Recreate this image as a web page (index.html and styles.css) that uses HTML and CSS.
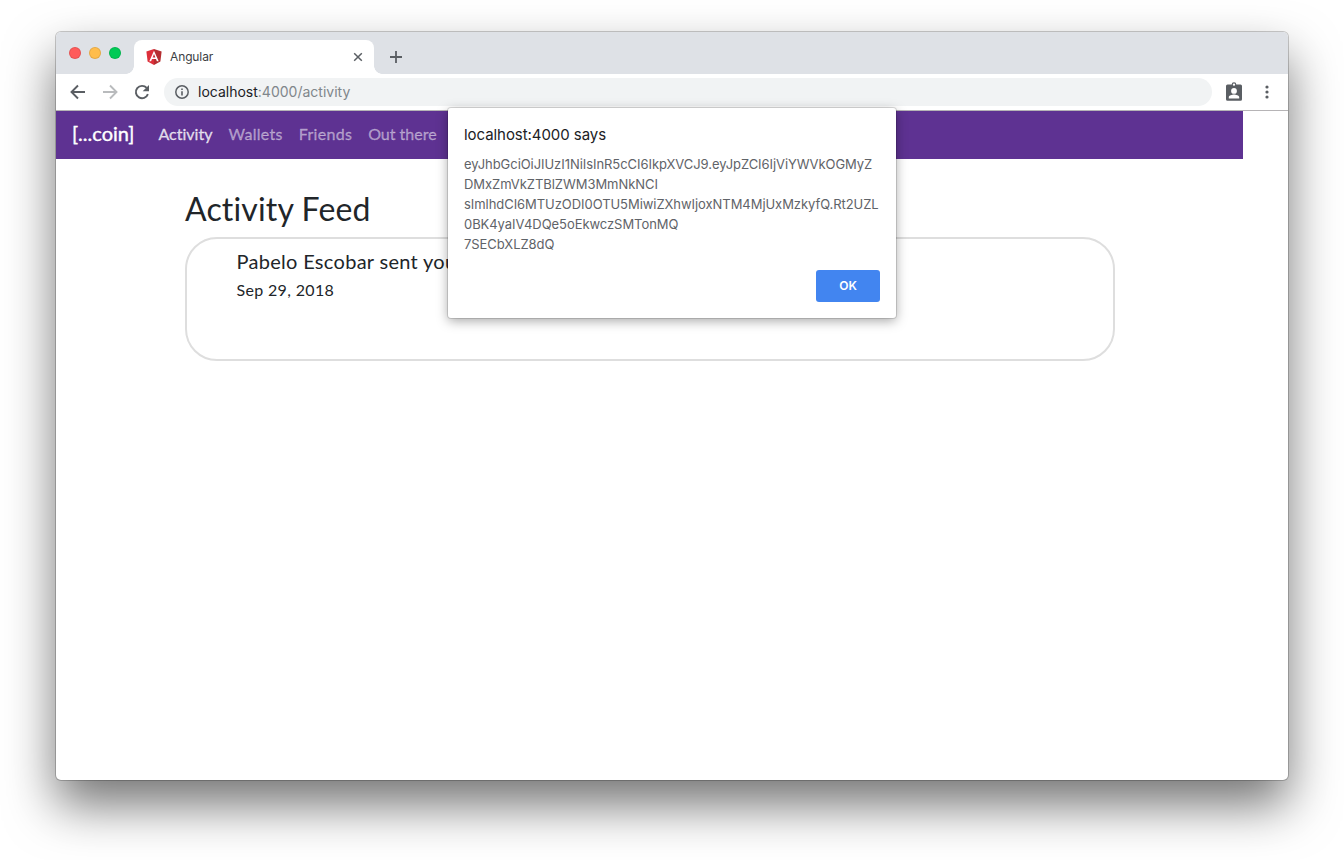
FILE: index.html
```html
<!DOCTYPE html>
<html lang="en">
<head>
<meta charset="utf-8">
<title>Angular</title>
<link rel="stylesheet" href="styles.css">
</head>
<body>
<div class="window">
  <div class="tabstrip">
    <div class="lights"><span class="light red"></span><span class="light yellow"></span><span class="light green"></span></div>
    <div class="tab">
      <svg class="favicon" width="16" height="18" viewBox="0 0 16 18"><path fill="#dd2f3a" d="M8 1 0.4 3.6l1.2 9.900L8 17z"/><path fill="#b52e31" d="M8 1l7.600 2.600-1.200 9.900L8 17z"/><path fill="#fff" fill-rule="evenodd" d="M8 2.800 3.300 13.200h1.800l.9-2.300h4l.9 2.300h1.800zM8 6.100l1.400 3.300H6.600z"/></svg>
      <span class="tab-title">Angular</span>
      <svg class="tab-close" width="10" height="10" viewBox="0 0 10 10"><path d="M1.200 1.200l7.600 7.600M8.800 1.200 1.200 8.800" stroke="#5a5e63" stroke-width="1.500"/></svg>
    </div>
    <svg class="new-tab" width="12" height="12" viewBox="0 0 12 12"><path d="M6 0v12M0 6h12" stroke="#5a5e63" stroke-width="1.800"/></svg>
  </div>
  <div class="toolbar">
    <svg class="tool" width="16" height="16" viewBox="0 0 16 16"><path d="M15 8H2M8 1.500 1.500 8 8 14.500" fill="none" stroke="#5a5e63" stroke-width="1.900"/></svg>
    <svg class="tool" width="16" height="16" viewBox="0 0 16 16"><path d="M1 8h13M8 1.500 14.500 8 8 14.500" fill="none" stroke="#b9bbbd" stroke-width="1.900"/></svg>
    <svg class="tool" width="16" height="16" viewBox="0 0 16 16"><path d="M13.900 10.200A6.200 6.200 0 1 1 12.700 3.900" fill="none" stroke="#5a5e63" stroke-width="1.900"/><path d="M15 1v6.300H8.700z" fill="#5a5e63"/></svg>
    <div class="omnibox">
      <svg width="14" height="14" viewBox="0 0 14 14"><circle cx="7" cy="7" r="6.200" fill="none" stroke="#5a5e63" stroke-width="1.500"/><path d="M7 6.200v4.300M7 3.400v1.600" stroke="#5a5e63" stroke-width="1.600"/></svg>
      <span class="url"><span class="host">localhost</span>:4000/activity</span>
    </div>
    <svg class="profile" width="16" height="19" viewBox="0 0 16 19"><path fill="#5a5e63" fill-rule="evenodd" d="M1.500 2.500h4.200a2.300 2.300 0 0 1 4.600 0h4.200A1.500 1.500 0 0 1 16 4v13.200a1.500 1.500 0 0 1-1.500 1.500h-13A1.500 1.500 0 0 1 0 17.200V4a1.500 1.500 0 0 1 1.500-1.500zM8 1.400a1.200 1.200 0 1 0 0 2.400 1.200 1.200 0 0 0 0-2.400zM8 6a2.900 2.900 0 1 0 0 5.800A2.900 2.900 0 0 0 8 6zm-5.200 10.500h10.400v-1.300c0-1.700-3.400-2.600-5.200-2.600s-5.200.9-5.200 2.600z"/></svg>
    <svg class="menu" width="4" height="14" viewBox="0 0 4 14"><g fill="#5a5e63"><circle cx="2" cy="2" r="1.600"/><circle cx="2" cy="7" r="1.600"/><circle cx="2" cy="12" r="1.600"/></g></svg>
  </div>
  <main class="page">
    <nav class="navbar">
      <span class="brand">[...coin]</span>
      <span class="link active">Activity</span>
      <span class="link wide">Wallets</span>
      <span class="link wide">Friends</span>
      <span class="link">Out there</span>
    </nav>
    <section class="feed">
      <h1>Activity Feed</h1>
      <article class="card">
        <div class="entry">Pabelo Escobar sent you</div>
        <div class="date">Sep 29, 2018</div>
      </article>
    </section>
  </main>
  <div class="dialog">
    <div class="dialog-title">localhost:4000 says</div>
    <div class="token">eyJhbGciOiJIUzI1NiIsInR5cCI6IkpXVCJ9.eyJpZCI6IjViYWVkOGMyZ<br>DMxZmVkZTBlZWM3MmNkNCI<br>sImlhdCI6MTUzODI0OTU5MiwiZXhwIjoxNTM4MjUxMzkyfQ.Rt2UZL<br>0BK4yaIV4DQe5oEkwczSMTonMQ<br>7SECbXLZ8dQ</div>
    <button class="ok">OK</button>
  </div>
</div>
</body>
</html>
```
FILE: styles.css
```css
* { box-sizing: border-box; }
body {
  margin: 0;
  height: 860px;
  padding: 32px 56px 80px;
  background: #fff;
  overflow: hidden;
  font-family: Inter, sans-serif;
}
svg { display: block; flex: none; }
.window {
  position: relative;
  height: 748px;
  border-radius: 5px;
  background: #fff;
  box-shadow: 0 0 0 1px rgba(0, 0, 0, .2), 0 25px 50px rgba(0, 0, 0, .55);
}
.tabstrip {
  display: flex;
  align-items: flex-end;
  height: 42px;
  background: #dee1e6;
  border-radius: 5px 5px 0 0;
}
.lights { display: flex; gap: 8px; padding: 0 19px 15px 13px; }
.light { width: 12px; height: 12px; border-radius: 50%; border: 1px solid rgba(0, 0, 0, .1); }
.red { background: #ff5b5b; }
.yellow { background: #ffbd4c; }
.green { background: #00ca56; }
.tab {
  position: relative;
  display: flex;
  align-items: center;
  width: 240px;
  height: 34px;
  margin-left: -6px;
  margin-right: 16px;
  padding: 0 11px 0 12px;
  background: #fff;
  border-radius: 8px 8px 0 0;
}
.tab::before,
.tab::after {
  content: "";
  position: absolute;
  bottom: 0;
  width: 8px;
  height: 8px;
}
.tab::before { left: -8px; background: radial-gradient(circle at 0 0, transparent 7.5px, #fff 8px); }
.tab::after { right: -8px; background: radial-gradient(circle at 100% 0, transparent 7.5px, #fff 8px); }
.tab-title {
  flex: 1;
  margin-left: 8px;
  padding-bottom: 2px;
  font-size: 12px;
  letter-spacing: -.12px;
  color: #3c4043;
}
.new-tab { margin-bottom: 11px; }
.toolbar {
  display: flex;
  align-items: center;
  height: 37px;
  padding: 0 19.500px 0 14px;
  border-bottom: 1px solid #b6b4b6;
}
.tool { margin-right: 16px; }
.omnibox {
  display: flex;
  align-items: center;
  gap: 9px;
  width: 1048px;
  height: 28px;
  margin-left: -2px;
  padding-left: 11px;
  border-radius: 14px;
  background: #f1f3f4;
}
.url { padding-bottom: 2px; font-size: 14px; color: #80868b; }
.host { color: #202124; }
.profile { margin: 0 0 2px 14px; }
.menu { margin-left: auto; }
.page {
  font-family: Lato, sans-serif;
  font-variant-ligatures: none;
  color: #212529;
}
.navbar {
  display: flex;
  align-items: center;
  width: 1187px;
  height: 48px;
  padding: 0 0 4px 16px;
  background: #5e3292;
}
.brand {
  width: 62.500px;
  margin-right: 24px;
  font-size: 20px;
  color: #fff;
  -webkit-text-stroke: .4px;
}
.link {
  margin-right: 16px;
  font-size: 16px;
  color: rgba(255, 255, 255, .47);
  -webkit-text-stroke: .3px;
}
.wide { letter-spacing: .3px; }
.active { color: rgba(255, 255, 255, .8); }
.feed { width: 930px; margin: 31px 0 0 129px; }
h1 { margin: 0; font-size: 32px; line-height: 38px; font-weight: 400; letter-spacing: .15px; }
.card {
  height: 124px;
  margin-top: 9px;
  padding: 8px 49.500px;
  border: 2px solid #dedede;
  border-radius: 32px;
}
.entry { font-size: 20px; line-height: 28px; letter-spacing: .3px; white-space: nowrap; }
.date { font-size: 16px; line-height: 29px; letter-spacing: .34px; }
.dialog {
  position: absolute;
  left: 392px;
  top: 76px;
  display: flex;
  flex-direction: column;
  width: 448px;
  height: 210px;
  padding: 16px;
  border-radius: 3px;
  background: #fff;
  box-shadow: 0 0 0 1px rgba(0, 0, 0, .13), 0 3px 12px rgba(0, 0, 0, .35);
}
.dialog-title { font-size: 15px; line-height: 22px; letter-spacing: -.06px; color: #202124; }
.token {
  margin-top: 8px;
  font-size: 13px;
  line-height: 20px;
  letter-spacing: -.055px;
  color: #5f6368;
  white-space: nowrap;
}
.ok {
  align-self: flex-end;
  width: 64px;
  height: 32px;
  margin-top: auto;
  padding: 0 0 2px;
  border: 0;
  border-radius: 3px;
  background: #4285f0;
  color: #fff;
  font: 600 12px Inter, sans-serif;
}
```
